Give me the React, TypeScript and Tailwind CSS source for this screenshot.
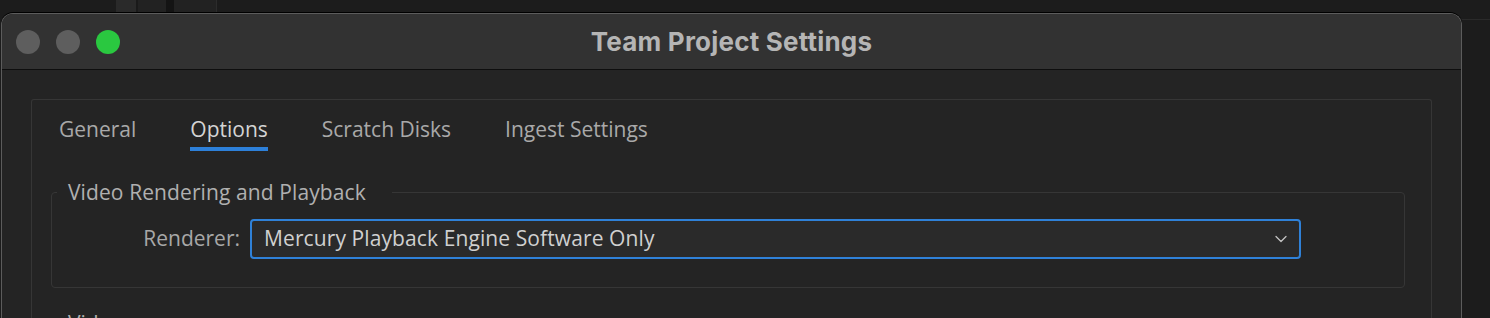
import { ChevronDown } from "lucide-react";

const tabs = ["General", "Options", "Scratch Disks", "Ingest Settings"];

export default function App() {
  const activeTab = "Options";

  return (
    <div className="relative h-[318px] w-[1490px] overflow-hidden bg-[#1c1c1c] font-['Open_Sans',sans-serif]">
      {/* stuff behind the dialog */}
      <div className="flex h-[13px]">
        <div className="w-[116px]" />
        <div className="w-[20px] bg-[#2a2a2a]" />
        <div className="w-[2px] bg-[#1a1a1a]" />
        <div className="w-[28px] bg-[#222222]" />
        <div className="w-[8px] bg-[#141414]" />
        <div className="w-[42px] bg-[#222222]" />
        <div className="w-[1px] bg-[#2c2c2c]" />
      </div>

      <div className="flex">
        <div className="ml-[1px] h-[305px] w-[1461px] rounded-t-[12px] border border-b-0 border-[#5c5c5c] bg-[#242424] shadow-[0_-1px_0_#000]">
          {/* title bar */}
          <div className="grid h-[56px] grid-cols-[1fr_auto_1fr] items-center rounded-t-[11px] border-b border-[#0e0e0e] bg-[#323232]">
            <div className="flex gap-[16px] pl-[14px]">
              <span className="h-[24px] w-[24px] rounded-full bg-[#5e5e5e]" />
              <span className="h-[24px] w-[24px] rounded-full bg-[#5e5e5e]" />
              <span className="h-[24px] w-[24px] rounded-full bg-[#2ac840]" />
            </div>
            <div className="font-['Inter',sans-serif] text-[26px] font-bold leading-none tracking-[0.2px] text-[#b5b5b5]">
              Team Project Settings
            </div>
            <div />
          </div>

          {/* settings panel */}
          <div className="mx-[29px] mt-[29px] h-[240px] rounded-t-[3px] border border-b-0 border-[#363636]">
            <div className="flex gap-[54px] pl-[27px] pt-[15px]">
              {tabs.map((tab) => (
                <div key={tab} className="flex flex-col">
                  <span
                    className={`text-[21px] leading-[28px] ${
                      tab === activeTab ? "text-[#d4d4d4]" : "text-[#a9a9a9]"
                    }`}
                  >
                    {tab}
                  </span>
                  <span
                    className={`mt-[4px] h-[4px] ${tab === activeTab ? "bg-[#2d80d9]" : "bg-transparent"}`}
                  />
                </div>
              ))}
            </div>

            <fieldset className="ml-[19px] mr-[26px] mt-[27px] rounded-[4px] border border-[#363636] px-[5px] pb-[28px] pt-[13px]">
              <legend className="pl-[11px] pr-[26px] text-[21px] leading-[28px] tracking-[0.1px] text-[#b0b0b0]">
                Video Rendering and Playback
              </legend>
              <div className="flex items-center">
                <label className="w-[183px] text-right text-[21px] text-[#a8a8a8]">Renderer:</label>
                <div className="ml-[10px] mr-[98px] flex h-[40px] flex-1 items-center justify-between rounded-[4px] border-2 border-[#2f81d8] bg-[#2a2a2a] pl-[12px] pr-[8px]">
                  <span className="text-[21px] tracking-[0.1px] text-[#d0d0d0]">Mercury Playback Engine Software Only</span>
                  <ChevronDown className="h-[20px] w-[20px] text-[#c4c4c4]" strokeWidth={1.5} />
                </div>
              </div>
            </fieldset>

            <div className="pl-[36px] pt-[21px] text-[21px] leading-[28px] text-[#b0b0b0]">Video</div>
          </div>
        </div>

        <div className="flex-1 pt-[6px]">
          <div className="h-[1px] bg-[#2a2a2a]" />
        </div>
      </div>
    </div>
  );
}
